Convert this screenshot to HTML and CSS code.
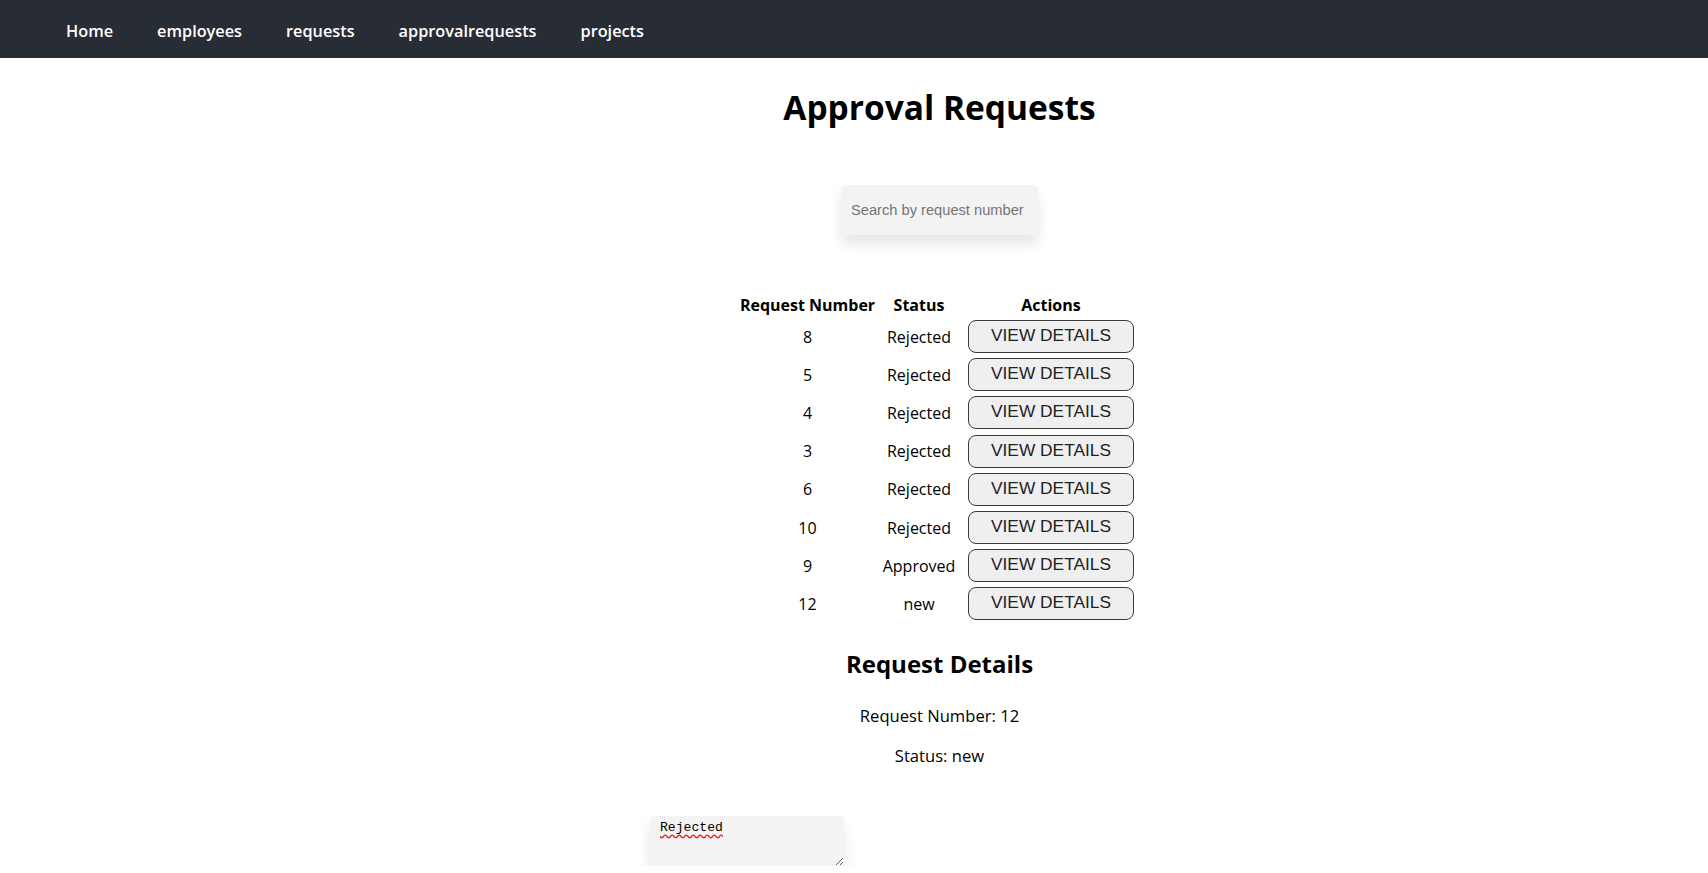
FILE: index.html
```html
<!DOCTYPE html>
<html lang="en">
<head>
<meta charset="utf-8">
<title>Approval Requests</title>
<link rel="stylesheet" href="styles.css">
</head>
<body>
<nav class="topnav">
  <a class="nav-link" href="#">Home</a>
  <a class="nav-link" href="#">employees</a>
  <a class="nav-link" href="#">requests</a>
  <a class="nav-link" href="#">approvalrequests</a>
  <a class="nav-link" href="#">projects</a>
</nav>
<main class="page">
  <h1 class="title">Approval Requests</h1>
  <div class="search-wrap">
    <input class="search" type="text" placeholder="Search by request number">
  </div>
  <table class="req-table">
    <thead>
      <tr><th class="c1">Request Number</th><th class="c2">Status</th><th class="c3">Actions</th></tr>
    </thead>
    <tbody>
      <tr><td>8</td><td>Rejected</td><td><button class="view-btn">VIEW DETAILS</button></td></tr>
      <tr><td>5</td><td>Rejected</td><td><button class="view-btn">VIEW DETAILS</button></td></tr>
      <tr><td>4</td><td>Rejected</td><td><button class="view-btn">VIEW DETAILS</button></td></tr>
      <tr><td>3</td><td>Rejected</td><td><button class="view-btn">VIEW DETAILS</button></td></tr>
      <tr><td>6</td><td>Rejected</td><td><button class="view-btn">VIEW DETAILS</button></td></tr>
      <tr><td>10</td><td>Rejected</td><td><button class="view-btn">VIEW DETAILS</button></td></tr>
      <tr><td>9</td><td>Approved</td><td><button class="view-btn">VIEW DETAILS</button></td></tr>
      <tr><td>12</td><td>new</td><td><button class="view-btn">VIEW DETAILS</button></td></tr>
    </tbody>
  </table>
  <section class="details">
    <h2 class="details-title">Request Details</h2>
    <p class="detail-line">Request Number: 12</p>
    <p class="detail-line">Status: new</p>
    <div class="decision">
      <textarea class="decision-text">Rejected</textarea>
    </div>
  </section>
</main>
</body>
</html>
```
FILE: styles.css
```css
html, body {
  margin: 0;
  padding: 0;
  background: #ffffff;
}
body {
  font-family: "Open Sans", "Noto Sans", sans-serif;
  color: #000;
}
.topnav {
  display: flex;
  align-items: center;
  gap: 44px;
  height: 58px;
  padding-left: 66px;
  background: #282c34;
}
.nav-link {
  color: #ffffff;
  text-decoration: none;
  font-size: 16.3px;
  font-weight: 600;
  line-height: 24px;
  padding-top: 4px;
}
.page {
  margin-left: 171px;
  text-align: center;
}
.title {
  font-size: 33.5px;
  font-weight: 700;
  line-height: 48px;
  margin: 25px 0 0;
}
.search-wrap {
  margin-top: 54px;
  display: flex;
  justify-content: center;
}
.search {
  box-sizing: border-box;
  width: 197px;
  height: 50px;
  padding: 0 10px;
  border: none;
  border-radius: 5px;
  background: #f3f3f3;
  box-shadow: 0 9px 14px rgba(0, 0, 0, 0.1);
  font-family: "Liberation Sans", Arial, sans-serif;
  font-size: 14.67px;
  color: #333;
  outline: none;
}
.search::placeholder {
  color: #757575;
}
.req-table {
  margin: 57px auto 0;
  border-spacing: 2px;
  font-size: 16px;
  line-height: 21px;
}
.req-table th,
.req-table td {
  padding: 1px;
  text-align: center;
  vertical-align: middle;
}
.req-table th {
  font-weight: 700;
}
.c1 { width: 137px; }
.c2 { width: 78px; }
.c3 { width: 178px; }
.view-btn {
  display: block;
  box-sizing: border-box;
  width: 166px;
  height: 33px;
  margin: 0 auto 1.2px;
  padding: 0 0 3px;
  border: 1px solid #3a3a3a;
  border-radius: 8px;
  background: #efefef;
  font-family: "Liberation Sans", Arial, sans-serif;
  font-size: 17.33px;
  line-height: 20px;
  color: #222;
}
.details-title {
  font-size: 24px;
  font-weight: 700;
  line-height: 32px;
  margin: 23px 0 0;
}
.detail-line {
  font-size: 16.6px;
  line-height: 24px;
  margin: 24px 0 0;
}
.detail-line + .detail-line {
  margin-top: 16px;
}
.decision {
  width: 579px;
  margin: 48px auto 0;
  text-align: left;
}
.decision-text {
  display: block;
  box-sizing: border-box;
  width: 194px;
  height: 50px;
  padding: 4px 10px 3px;
  border: none;
  border-radius: 5px;
  background: #f3f3f3;
  box-shadow: 0 9px 14px rgba(0, 0, 0, 0.1);
  font-family: "Liberation Mono", monospace;
  font-size: 13.1px;
  color: #000;
  text-decoration: underline wavy #e02020;
  text-underline-offset: 3px;
  resize: both;
}
```
